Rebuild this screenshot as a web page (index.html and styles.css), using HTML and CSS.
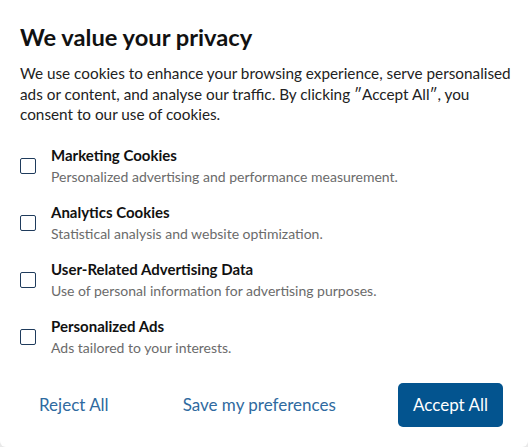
FILE: index.html
```html
<!DOCTYPE html>
<html>
<head>
<meta charset="utf-8">
<link rel="stylesheet" href="styles.css">
</head>
<body>
<div class="dialog">
  <h1 class="title">We value your privacy</h1>
  <p class="intro">We use cookies to enhance your browsing experience, serve personalised ads or content, and analyse our traffic. By clicking ″Accept All″, you consent to our use of cookies.</p>
  <ul class="options">
    <li class="option">
      <span class="box"></span>
      <div class="text">
        <div class="name">Marketing Cookies</div>
        <div class="desc">Personalized advertising and performance measurement.</div>
      </div>
    </li>
    <li class="option">
      <span class="box"></span>
      <div class="text">
        <div class="name">Analytics Cookies</div>
        <div class="desc">Statistical analysis and website optimization.</div>
      </div>
    </li>
    <li class="option">
      <span class="box"></span>
      <div class="text">
        <div class="name">User-Related Advertising Data</div>
        <div class="desc">Use of personal information for advertising purposes.</div>
      </div>
    </li>
    <li class="option">
      <span class="box"></span>
      <div class="text">
        <div class="name">Personalized Ads</div>
        <div class="desc">Ads tailored to your interests.</div>
      </div>
    </li>
  </ul>
  <div class="actions">
    <button class="link reject">Reject All</button>
    <button class="link save">Save my preferences</button>
    <button class="primary">Accept All</button>
  </div>
</div>
</body>
</html>
```
FILE: styles.css
```css
html, body {
  margin: 0;
  padding: 0;
  background: #e9e9e9;
}
body {
  font-family: Lato, "Open Sans", sans-serif;
  color: #1d1d1d;
}
.dialog {
  width: 528px;
  height: 447px;
  box-sizing: border-box;
  background: #fff;
  border-radius: 0 0 6px 6px;
  padding: 23px 20px 0 20px;
}
.title {
  margin: 0;
  font-size: 23.7px;
  font-weight: 700;
  line-height: 28px;
  color: #111;
}
.intro {
  margin: 12px -8px 0 0;
  font-size: 15.3px;
  line-height: 20.5px;
  color: #222;
}
.options {
  list-style: none;
  margin: 19px 0 0 0;
  padding: 0;
  display: flex;
  flex-direction: column;
  gap: 13px;
}
.option {
  display: flex;
  align-items: center;
  gap: 15px;
  height: 44px;
}
.box {
  width: 14px;
  height: 14px;
  border: 1.5px solid #1f3b5c;
  border-radius: 2px;
  flex: none;
  margin-top: 1px;
}
.name {
  font-size: 15px;
  font-weight: 700;
  line-height: 20px;
  color: #111;
}
.desc {
  margin-top: 2px;
  font-size: 14px;
  line-height: 20px;
  color: #6b6b6b;
}
.actions {
  margin-top: 24px;
  display: flex;
  align-items: center;
}
.link {
  background: none;
  border: none;
  font-family: inherit;
  font-size: 17px;
  color: #2f6aa0;
  padding: 0;
}
.reject {
  margin-left: 19px;
}
.save {
  margin-left: 74px;
}
.primary {
  margin-left: auto;
  margin-right: 5px;
  width: 105px;
  height: 44px;
  background: #03548f;
  color: #fff;
  border: none;
  border-radius: 5px;
  font-family: inherit;
  font-size: 17px;
  padding: 0;
}
```
